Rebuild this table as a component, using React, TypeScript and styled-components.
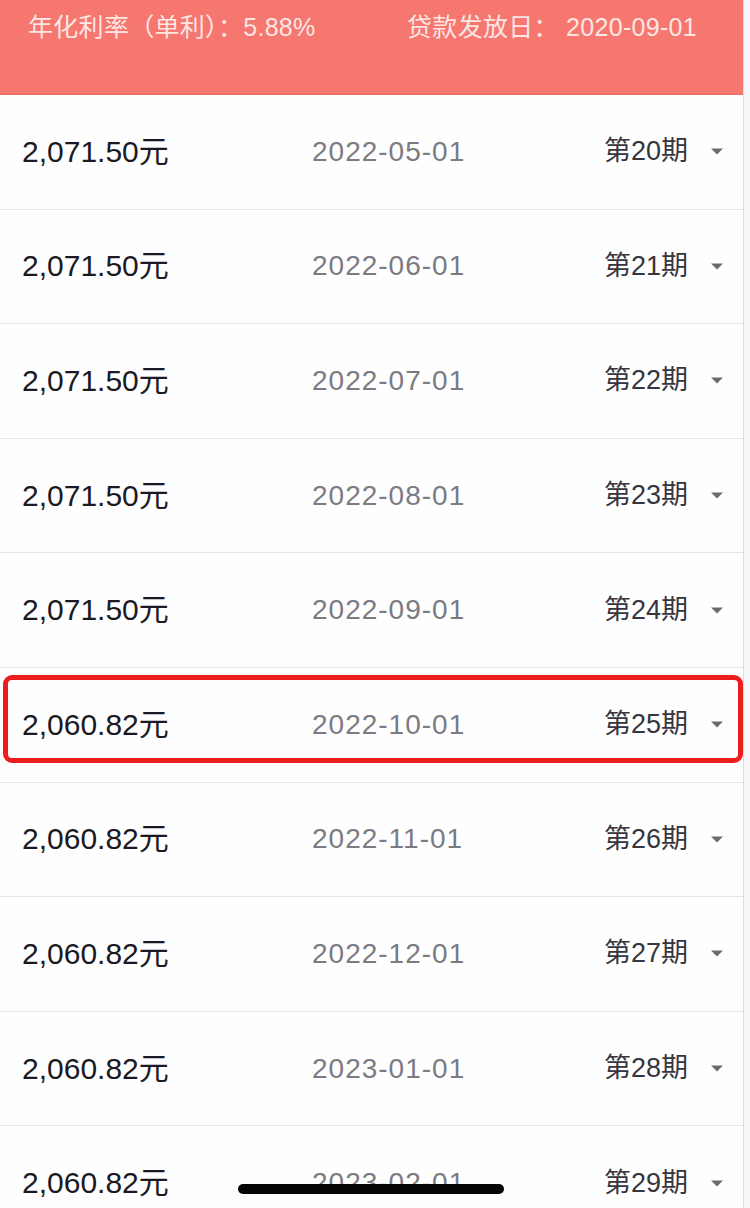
import React from "react";
import styled, { createGlobalStyle } from "styled-components";

const GlobalStyle = createGlobalStyle`
  html, body {
    margin: 0;
    padding: 0;
    width: 750px;
    height: 1208px;
    overflow: hidden;
    background: #f6f6f8;
    font-family: "Liberation Sans", "Noto Sans CJK SC", sans-serif;
  }
`;

const Screen = styled.div`
  position: relative;
  width: 743px;
  height: 1208px;
  background: #ffffff;
  border-right: 1px solid #dcdce0;
  overflow: hidden;
`;

const Header = styled.header`
  height: 95px;
  box-sizing: border-box;
  padding: 12px 46px 0 28px;
  display: flex;
  justify-content: space-between;
  align-items: flex-start;
  background: #f5776f;
  border-bottom: 1px solid #e8706a;
`;

const HeaderText = styled.span`
  font-size: 25px;
  line-height: 30px;
  letter-spacing: 0.3px;
  color: #fde6e4;
`;

const List = styled.div`
  display: flex;
  flex-direction: column;
`;

const Row = styled.div`
  position: relative;
  height: 114.6px;
  box-sizing: border-box;
  display: flex;
  align-items: center;
  padding: 0 20px 0 22px;
  border-bottom: 1px solid #e4e4e9;
  background: #fefeff;
  line-height: 1;
`;

const Amount = styled.span`
  width: 290px;
  flex: none;
  font-size: 30px;
  color: #1b1a22;
`;

const DateText = styled.span`
  flex: 1;
  font-size: 28px;
  letter-spacing: 1px;
  color: #7c7a82;
`;

const Period = styled.span`
  font-size: 27px;
  color: #37353d;
`;

const Caret = styled.svg`
  margin-left: 23px;
  width: 12px;
  height: 7px;
  flex: none;
`;

const Highlight = styled.div`
  position: absolute;
  left: 3px;
  right: 0;
  top: 7px;
  bottom: 19px;
  border: 5px solid #ee1d1d;
  border-radius: 9px;
  pointer-events: none;
`;

const HomeIndicator = styled.div`
  position: absolute;
  left: 238px;
  top: 1184px;
  width: 266px;
  height: 10px;
  border-radius: 5px;
  background: #050505;
`;

const rows = [
  { amount: "2,071.50元", date: "2022-05-01", period: "第20期" },
  { amount: "2,071.50元", date: "2022-06-01", period: "第21期" },
  { amount: "2,071.50元", date: "2022-07-01", period: "第22期" },
  { amount: "2,071.50元", date: "2022-08-01", period: "第23期" },
  { amount: "2,071.50元", date: "2022-09-01", period: "第24期" },
  { amount: "2,060.82元", date: "2022-10-01", period: "第25期", highlight: true },
  { amount: "2,060.82元", date: "2022-11-01", period: "第26期" },
  { amount: "2,060.82元", date: "2022-12-01", period: "第27期" },
  { amount: "2,060.82元", date: "2023-01-01", period: "第28期" },
  { amount: "2,060.82元", date: "2023-02-01", period: "第29期" },
];

export default function App() {
  return (
    <>
      <GlobalStyle />
      <Screen>
        <Header>
          <HeaderText>年化利率（单利）：5.88%</HeaderText>
          <HeaderText>贷款发放日： 2020-09-01</HeaderText>
        </Header>
        <List>
          {rows.map((r) => (
            <Row key={r.period}>
              <Amount>{r.amount}</Amount>
              <DateText>{r.date}</DateText>
              <Period>{r.period}</Period>
              <Caret viewBox="0 0 12 7">
                <path d="M0 0.5 L12 0.5 L6 6.5 Z" fill="#6d6b72" />
              </Caret>
              {r.highlight && <Highlight />}
            </Row>
          ))}
        </List>
        <HomeIndicator />
      </Screen>
    </>
  );
}
